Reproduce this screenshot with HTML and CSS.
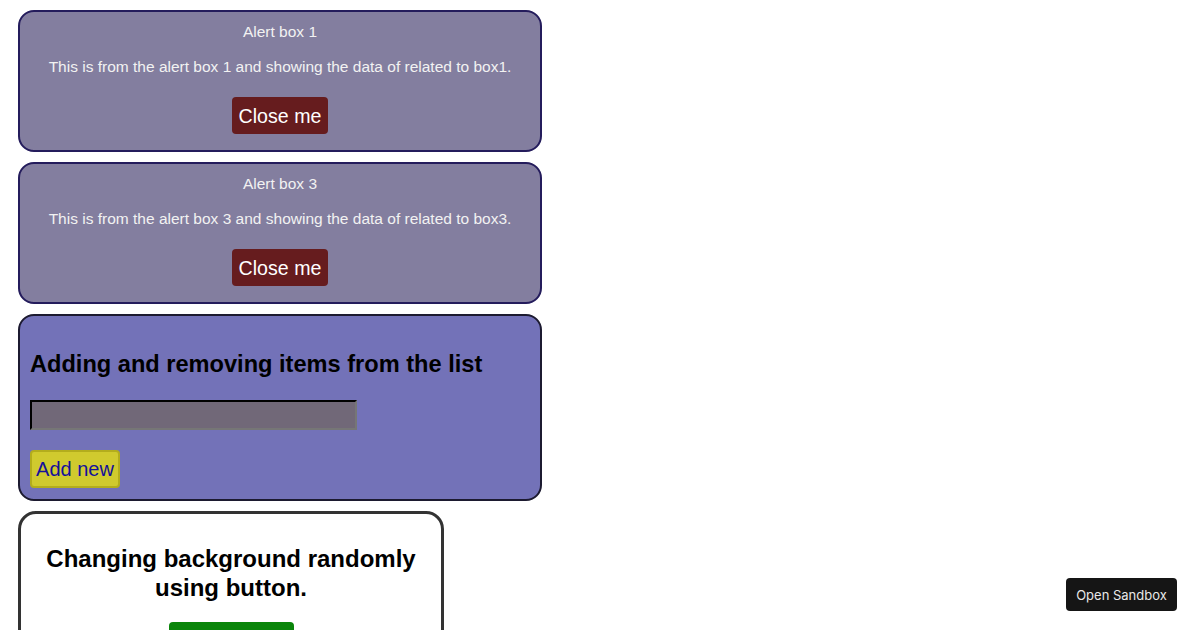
FILE: index.html
```html
<!DOCTYPE html>
<html>
<head>
<meta charset="utf-8">
<link rel="stylesheet" href="styles.css">
</head>
<body>
<div class="app">
  <div class="alert">
    <p class="alert-title">Alert box 1</p>
    <p class="alert-text">This is from the alert box 1 and showing the data of related to box1.</p>
    <button class="close-btn">Close me</button>
  </div>
  <div class="alert">
    <p class="alert-title">Alert box 3</p>
    <p class="alert-text">This is from the alert box 3 and showing the data of related to box3.</p>
    <button class="close-btn">Close me</button>
  </div>
  <div class="list-box">
    <h2 class="list-title">Adding and removing items from the list</h2>
    <input class="list-input" type="text">
    <button class="add-btn">Add new</button>
  </div>
  <div class="bg-box">
    <h2 class="bg-title">Changing background randomly using button.</h2>
    <button class="bg-btn" aria-label="Change background"></button>
  </div>
</div>
<a class="sandbox-btn">Open Sandbox</a>
</body>
</html>
```
FILE: styles.css
```css
html, body {
  margin: 0;
  padding: 0;
  background: #fff;
  font-family: "Liberation Sans", Arial, sans-serif;
}
body {
  padding: 10px 0 0 18px;
  height: 630px;
  overflow: hidden;
  box-sizing: border-box;
}
.app {
  display: flex;
  flex-direction: column;
  align-items: flex-start;
  gap: 10px;
}
.alert {
  width: 524px;
  height: 142px;
  box-sizing: border-box;
  border: 2px solid #241c5c;
  border-radius: 16px;
  background: #837e9f;
  color: #f2f2f2;
  display: flex;
  flex-direction: column;
  align-items: center;
  padding-top: 11px;
}
.alert-title {
  margin: 0;
  font-size: 15.5px;
  line-height: 18px;
}
.alert-text {
  margin: 17px 0 0;
  font-size: 15.5px;
  line-height: 18px;
}
.close-btn {
  margin-top: 21px;
  height: 37px;
  width: 96px;
  padding: 1px 0 0;
  border: none;
  border-radius: 4px;
  background: #661c1e;
  color: #fff;
  font-family: "Liberation Sans", Arial, sans-serif;
  font-size: 19.6px;
}
.list-box {
  width: 524px;
  height: 187px;
  box-sizing: border-box;
  border: 2px solid #1c1a30;
  border-radius: 16px;
  background: #7372b8;
  padding: 0 10px;
  display: flex;
  flex-direction: column;
  align-items: flex-start;
}
.list-title {
  margin: 34px 0 0;
  font-size: 23.6px;
  line-height: 28px;
  color: #000;
}
.list-input {
  margin-top: 22px;
  width: 327px;
  height: 30px;
  box-sizing: border-box;
  border: 2px inset #767676;
  border-top-color: #222;
  border-left-color: #222;
  background: #716878;
}
.add-btn {
  margin-top: 20px;
  width: 90px;
  height: 38px;
  box-sizing: border-box;
  padding: 0;
  border: 2px solid #b3ad1c;
  border-radius: 4px;
  background: #d0ca2e;
  color: #14109a;
  font-family: "Liberation Sans", Arial, sans-serif;
  font-size: 20px;
}
.bg-box {
  width: 426px;
  height: 160px;
  box-sizing: border-box;
  border: 3px solid #333;
  border-radius: 18px;
  background: #fff;
  display: flex;
  flex-direction: column;
  align-items: center;
  padding: 0 20px;
}
.bg-title {
  margin: 30px 0 0;
  font-size: 24px;
  line-height: 29px;
  text-align: center;
  color: #000;
}
.bg-btn {
  margin-top: 20px;
  width: 125px;
  height: 38px;
  border: none;
  border-radius: 4px;
  background: #0a850a;
  color: #fff;
  font-family: "Liberation Sans", Arial, sans-serif;
  font-size: 20px;
}
.sandbox-btn {
  position: fixed;
  right: 23px;
  bottom: 19px;
  width: 111px;
  height: 33px;
  box-sizing: border-box;
  border-radius: 4px;
  background: #151515;
  color: #e8e8e8;
  font-family: Inter, "Liberation Sans", sans-serif;
  font-size: 13px;
  display: flex;
  align-items: center;
  justify-content: center;
}
```
